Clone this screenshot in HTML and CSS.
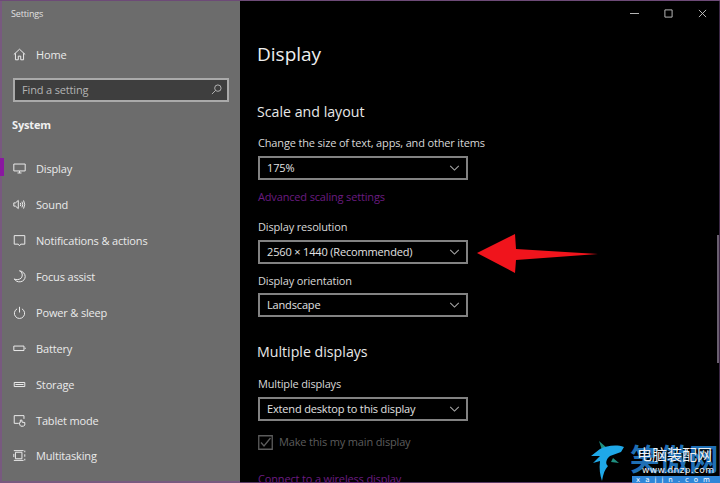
FILE: index.html
```html
<!DOCTYPE html>
<html lang="en">
<head>
<meta charset="utf-8">
<title>Settings</title>
<link rel="stylesheet" href="styles.css">
</head>
<body>
<div class="window">
  <aside class="sidebar">
    <div class="app-title">Settings</div>
    <div class="home nav-item">
      <svg class="icon" viewBox="0 0 16 16"><path d="M1 8 8 1.500 15 8M3 6.500V14.500H6.500V10H9.500V14.500H13V6.500"/></svg>
      <span>Home</span>
    </div>
    <div class="search">
      <span>Find a setting</span>
      <svg class="search-icon" viewBox="0 0 12 12"><circle cx="7.500" cy="4.500" r="3.500"/><path d="M5 7 1 11"/></svg>
    </div>
    <div class="group">System</div>
    <nav class="nav">
      <div class="nav-item active">
        <svg class="icon" viewBox="0 0 16 16"><path d="M1 2.500H15V11H1ZM5.500 13.500H10.500M8 11V13.500"/></svg>
        <span>Display</span>
      </div>
      <div class="nav-item">
        <svg class="icon" viewBox="0 0 16 16"><path d="M1 6V10H3L6.500 13V3L3 6ZM9 6Q10 8 9 10M11 4.500Q13 8 11 11.500M13 3Q15.800 8 13 13"/></svg>
        <span>Sound</span>
      </div>
      <div class="nav-item">
        <svg class="icon" viewBox="0 0 16 16"><path d="M1.500 2H14.500V12.500H9.500L8 14.500 6.500 12.500H1.500Z"/></svg>
        <span>Notifications &amp; actions</span>
      </div>
      <div class="nav-item">
        <svg class="icon" viewBox="0 0 16 16"><path d="M8 1C11.500 2.500 12.500 7 10 10 8 12 4 12.500 1.500 11 3 13.500 6 15 9 14.500 13 14 15 11 15 8 15 4.500 12 1.500 8 1Z"/></svg>
        <span>Focus assist</span>
      </div>
      <div class="nav-item">
        <svg class="icon" viewBox="0 0 16 16"><path d="M5 3.500A6.300 6.300 0 1 0 11 3.500M8 1V8"/></svg>
        <span>Power &amp; sleep</span>
      </div>
      <div class="nav-item">
        <svg class="icon" viewBox="0 0 16 16"><path d="M1 5H13.500V10.500H1ZM15 7V8.500"/></svg>
        <span>Battery</span>
      </div>
      <div class="nav-item">
        <svg class="icon" viewBox="0 0 16 16"><path d="M1.500 5.500H14.500V10.500H1.500ZM3 8H13"/></svg>
        <span>Storage</span>
      </div>
      <div class="nav-item">
        <svg class="icon" viewBox="0 0 16 16"><path d="M7 11.500H1.500V2H13.500V6M9 14.500 7.500 11 9 10.500V7.500H11V10L14.500 10.500V13.500L13 15H9.500Z"/></svg>
        <span>Tablet mode</span>
      </div>
      <div class="nav-item last">
        <svg class="icon" viewBox="0 0 16 16"><path d="M3 4H11V12H3ZM1 2H13M1 14H13M1 6V10M14.500 2V4M14.500 6.500V9.500M14.500 12V14"/></svg>
        <span>Multitasking</span>
      </div>
    </nav>
  </aside>
  <main class="content">
    <div class="caption">
      <svg class="cap-icon" viewBox="0 0 10 10"><path d="M0 5H10"/></svg>
      <svg class="cap-icon" viewBox="0 0 10 10"><path d="M1 1H9V9H1Z"/></svg>
      <svg class="cap-icon" viewBox="0 0 10 10"><path d="M1 1 9 9M9 1 1 9"/></svg>
    </div>
    <h1>Display</h1>
    <h2 class="scale-head">Scale and layout</h2>
    <label class="field-label first">Change the size of text, apps, and other items</label>
    <div class="select"><span>175%</span><svg class="chev" viewBox="0 0 12 7"><path d="M1 1 6 6 11 1"/></svg></div>
    <a class="link adv">Advanced scaling settings</a>
    <label class="field-label res">Display resolution</label>
    <div class="select"><span>2560 × 1440 (Recommended)</span><svg class="chev" viewBox="0 0 12 7"><path d="M1 1 6 6 11 1"/></svg></div>
    <label class="field-label orient">Display orientation</label>
    <div class="select orient-select"><span>Landscape</span><svg class="chev" viewBox="0 0 12 7"><path d="M1 1 6 6 11 1"/></svg></div>
    <h2 class="multi-head">Multiple displays</h2>
    <label class="field-label multi">Multiple displays</label>
    <div class="select multi-select"><span>Extend desktop to this display</span><svg class="chev" viewBox="0 0 12 7"><path d="M1 1 6 6 11 1"/></svg></div>
    <div class="check">
      <svg class="checkbox" viewBox="0 0 15 15"><path class="box" d="M.75.75H14.250V14.250H.75Z"/><path d="M3 7.500 6 11 12.500 3"/></svg>
      <span>Make this my main display</span>
    </div>
    <a class="link connect">Connect to a wireless display</a>
    <div class="scrollbar"></div>
  </main>
  <svg class="arrow" viewBox="0 0 122 40"><path d="M0 19 38 0 39 15 121 20 39 26 38 39Z"/></svg>
  <div class="watermark">
    <svg class="shark" viewBox="0 0 40 43"><path class="fin" d="M13 2 21 9 16 11ZM27 19 33 24 25 23Z"/><path d="M38 8C30 5 20 7 14 10L5 17 14 17 7 24 14 22C13 30 14 36 16 42 17 35 19 30 22 27 19 25 20 20 24 17L35 13Z"/></svg>
    <div class="wm-brand">
      <div class="wm-big">笑傲网</div>
      <div class="wm-cn">电脑装配网</div>
      <div class="wm-url">www.dnzp.com</div>
      <div class="wm-strip">xajjn.com</div>
    </div>
  </div>
</div>
</body>
</html>
```
FILE: styles.css
```css
* { box-sizing: border-box; }
html, body { margin: 0; padding: 0; }
body { width: 720px; height: 483px; overflow: hidden; background: #000; font-family: "Open Sans", "Noto Sans", "Liberation Sans", sans-serif; letter-spacing: -.16px; }
.window { position: relative; display: flex; width: 720px; height: 483px; overflow: hidden; border-top: 1px solid #6d4a77; }
.sidebar { width: 240px; flex: none; background: #6c6c6c; color: #ececec; border-left: 2px solid #78597f; border-bottom: 2px solid #78597f; display: flex; flex-direction: column; }
.app-title { font-size: 9px; line-height: 12px; padding: 7px 0 0 9px; color: #e0e0e0; }
.nav-item { display: flex; align-items: center; height: 36px; font-size: 11px; color: #eaeaea; position: relative; }
.nav-item .icon { width: 13px; height: 13px; margin-left: 11px; margin-right: 10px; flex: none; fill: none; stroke: #eee; stroke-width: 1.200; }
.home { margin-top: 16px; }
.last { margin-top: -1px; }
.search { display: flex; align-items: center; justify-content: space-between; width: 216px; height: 24px; margin: 6px 0 0 11px; background: #3e3e3e; border: 2px solid #aaa; padding: 0 5px 1px 7px; font-size: 11px; color: #b4b4b4; }
.search-icon { width: 11px; height: 11px; fill: none; stroke: #bbb; stroke-width: 1; }
.group { font-size: 11px; font-weight: 700; color: #f0f0f0; padding: 15px 0 0 10px; height: 41px; line-height: 16px; }
.nav { display: flex; flex-direction: column; margin-top: 7px; }
.active::before { content: ""; position: absolute; left: -2px; top: 8px; width: 4px; height: 18px; background: #8a18a0; }
.content { position: relative; flex: 1; color: #e6e6e6; padding-left: 18px; border-right: 1px solid #3c2745; border-bottom: 1px solid #5a3a66; }
.caption { position: absolute; top: 8px; right: 12px; display: flex; gap: 25px; }
.cap-icon { width: 9px; height: 9px; fill: none; stroke: #c8c8c8; stroke-width: 1; }
h1 { margin: 38px 0 0 -1px; font-size: 19px; font-weight: 400; line-height: 30px; color: #eee; letter-spacing: 0; }
h2 { margin: 0; font-size: 14.200px; font-weight: 400; line-height: 20px; color: #e8e8e8; letter-spacing: 0; }
.scale-head { margin: 33px 0 0 -1px; }
.field-label { display: block; font-size: 11px; line-height: 14px; color: #d8d8d8; }
.first { margin-top: 14px; }
.select { display: flex; align-items: center; justify-content: space-between; width: 210px; height: 24px; margin-top: 6px; padding: 0 6px 2px 7px; border: 2px solid #828282; font-size: 11px; color: #e2e2e2; background: #000; }
.chev { width: 11px; height: 6px; margin-top: 2px; fill: none; stroke: #a8a8a8; stroke-width: 1.200; }
.link { display: block; font-size: 11px; line-height: 14px; color: #6b1c80; }
.adv { margin-top: 10px; }
.res { margin-top: 16px; }
.orient { margin-top: 10px; }
.orient-select { margin-top: 5px; }
.multi-head { margin: 25px 0 0 -1px; }
.multi { margin-top: 15px; }
.multi-select { margin-top: 6px; }
.check { display: flex; align-items: center; gap: 6px; margin-top: 13px; font-size: 11px; line-height: 16px; color: #5c5c5c; }
.checkbox { width: 15px; height: 15px; fill: none; stroke: #5c5c5c; stroke-width: 1.300; }
.connect { margin-top: 22px; }
.scrollbar { position: absolute; right: 0; top: 234px; width: 2px; height: 128px; background: #6a5f70; }
.arrow { position: absolute; left: 477px; top: 233px; width: 122px; height: 40px; fill: #f0141c; }
.watermark { position: absolute; left: 586px; top: 438px; width: 134px; height: 45px; display: flex; }
.shark { width: 40px; height: 43px; fill: #1fa8e8; flex: none; }
.fin { fill: #1f8f80; }
.wm-brand { position: relative; flex: 1; }
.wm-big { position: absolute; left: 4px; top: 0; font-family: "Noto Sans CJK SC", sans-serif; font-size: 29.500px; line-height: 36px; white-space: nowrap; font-weight: 700; color: #1f6fb5; letter-spacing: 0; }
.wm-cn { position: absolute; left: 11px; top: 6px; font-family: "Noto Sans CJK SC", sans-serif; font-size: 15px; line-height: 18px; color: #f2f2f2; white-space: nowrap; letter-spacing: 0; }
.wm-url { position: absolute; left: 16px; top: 26px; font-family: "DejaVu Sans", sans-serif; font-size: 9px; line-height: 11px; letter-spacing: .35px; color: #f2f2f2; white-space: nowrap; }
.wm-strip { position: absolute; left: 6px; right: 0; bottom: 0; height: 8px; background: #2f86d8; color: #fff; font-family: "DejaVu Sans", sans-serif; font-size: 7px; line-height: 8px; letter-spacing: 5px; padding-left: 4px; overflow: hidden; white-space: nowrap; }
```
